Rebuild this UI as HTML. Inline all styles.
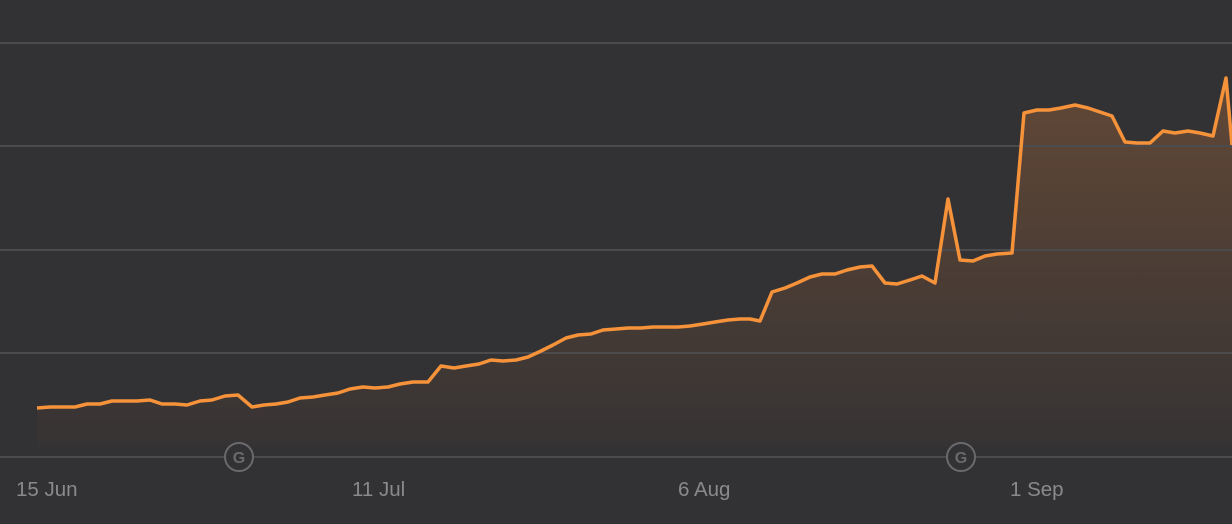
<!DOCTYPE html>
<html><head><meta charset="utf-8"><style>
html,body{margin:0;padding:0;background:#323234;}
svg{display:block}
text{font-family:"Liberation Sans",sans-serif;font-size:20.5px;fill:#8a8a8c}
</style></head><body>
<svg width="1232" height="524" viewBox="0 0 1232 524">
<defs><linearGradient id="g" x1="0" y1="0" x2="0" y2="1" gradientUnits="objectBoundingBox">
<stop offset="0" stop-color="#624836"/><stop offset="1" stop-color="#363334"/></linearGradient></defs>
<rect width="1232" height="524" fill="#323234"/>
<polygon fill="url(#g)" points="37,447 37,408 50,407 62,407 75,407 87,404 100,404 112,401 124,401 137,401 150,400 162,404 175,404 187,405 200,401 212,400 225,396 238,395 252,407 264,405 276,404 288,402 300,398 313,397 325,395 338,393 350,389 363,387 375,388 388,387 400,384 413,382 428,382 441,366 454,368 466,366 479,364 491,360 503,361 516,360 528,357 541,351 553,345 566,338 578,335 591,334 603,330 616,329 628,328 641,328 653,327 666,327 678,327 690,326 703,324 715,322 728,320 740,319 750,319 760,321 772,292 785,288 797,283 810,277 822,274 835,274 847,270 860,267 872,266 885,283 897,284 910,280 922,276 935,283 948,199 960,260 973,261 985,256 997,254 1012,253 1024,113 1037,110 1049,110 1061,108 1075,105 1088,108 1100,112 1112,116 1125,142 1137,143 1150,143 1163,131 1175,133 1188,131 1200,133 1213,136 1226,78 1232,145 1232,447"/>
<g stroke="#4b4b4d" stroke-width="2">
<line x1="0" y1="43" x2="1232" y2="43"/><line x1="0" y1="146" x2="1232" y2="146"/>
<line x1="0" y1="250" x2="1232" y2="250"/><line x1="0" y1="353" x2="1232" y2="353"/>
<line x1="0" y1="457" x2="1232" y2="457"/></g>
<polyline fill="none" stroke="#f5923a" stroke-width="3.5" stroke-linejoin="round" points="37,408 50,407 62,407 75,407 87,404 100,404 112,401 124,401 137,401 150,400 162,404 175,404 187,405 200,401 212,400 225,396 238,395 252,407 264,405 276,404 288,402 300,398 313,397 325,395 338,393 350,389 363,387 375,388 388,387 400,384 413,382 428,382 441,366 454,368 466,366 479,364 491,360 503,361 516,360 528,357 541,351 553,345 566,338 578,335 591,334 603,330 616,329 628,328 641,328 653,327 666,327 678,327 690,326 703,324 715,322 728,320 740,319 750,319 760,321 772,292 785,288 797,283 810,277 822,274 835,274 847,270 860,267 872,266 885,283 897,284 910,280 922,276 935,283 948,199 960,260 973,261 985,256 997,254 1012,253 1024,113 1037,110 1049,110 1061,108 1075,105 1088,108 1100,112 1112,116 1125,142 1137,143 1150,143 1163,131 1175,133 1188,131 1200,133 1213,136 1226,78 1232,145"/>
<g>
<circle cx="239" cy="457" r="14" fill="#323234" stroke="#6a6a6c" stroke-width="2"/>
<text x="239" y="463" text-anchor="middle" style="font-size:16px;font-weight:bold;fill:#6a6a6c">G</text>
<circle cx="961" cy="457" r="14" fill="#323234" stroke="#6a6a6c" stroke-width="2"/>
<text x="961" y="463" text-anchor="middle" style="font-size:16px;font-weight:bold;fill:#6a6a6c">G</text>
</g>
<text x="16" y="496">15 Jun</text>
<text x="352" y="496">11 Jul</text>
<text x="678" y="496">6 Aug</text>
<text x="1010" y="496">1 Sep</text>
</svg>
</body></html>
